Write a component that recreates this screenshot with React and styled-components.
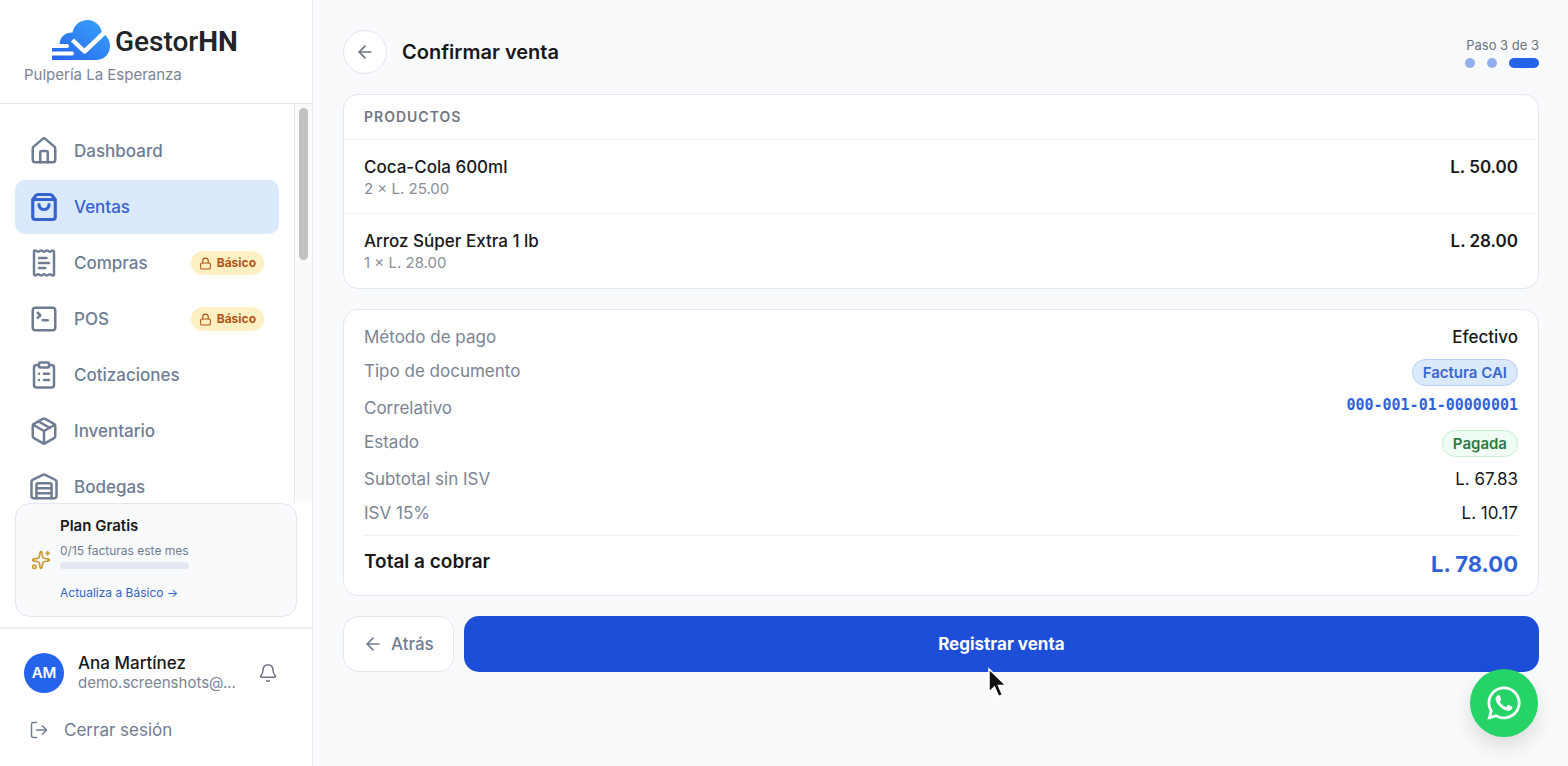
import styled, { createGlobalStyle } from 'styled-components';
import {
  ArrowLeft,
  Bell,
  ClipboardList,
  House,
  Lock,
  LogOut,
  Package,
  ReceiptText,
  ShoppingBag,
  Sparkles,
  SquareTerminal,
  Warehouse,
} from 'lucide-react';
import { FaWhatsapp } from 'react-icons/fa';

const GlobalStyle = createGlobalStyle`
  *, *::before, *::after {
    box-sizing: border-box;
  }

  body {
    margin: 0;
    background-color: #f8fafc;
    color: #18181b;
    font-family: Inter, 'Liberation Sans', sans-serif;
    font-size: 17px;
    line-height: 24px;
  }

  button {
    font: inherit;
    cursor: pointer;
  }

  a {
    text-decoration: none;
  }

  h1, h2, p, ul, dl, dd {
    margin: 0;
    padding: 0;
  }
`;

const Layout = styled.div`
  display: grid;
  grid-template-columns: 313px minmax(0, 1fr);
  min-height: 100vh;
`;

const Sidebar = styled.aside`
  position: sticky;
  top: 0;
  display: flex;
  flex-direction: column;
  height: 100vh;
  background-color: #fff;
  border-right: 1px solid #e5e9f0;
`;

const Brand = styled.div`
  padding: 20px 24px 17px;
  border-bottom: 1px solid #e2e6ec;
`;

const Logo = styled.a`
  display: flex;
  align-items: flex-start;
  gap: 5px;
  padding-left: 28px;
  color: #222326;
  font-family: Roboto, sans-serif;
  font-size: 28px;
  font-weight: 500;
  line-height: 44px;

  svg {
    flex: none;
  }
`;

const Company = styled.p`
  color: #7b8494;
  font-size: 15px;
  line-height: 22px;
`;

const NavArea = styled.div`
  display: flex;
  flex: 1;
  min-height: 0;
`;

const Nav = styled.nav`
  flex: 1;
  padding: 20px 15px 0;
  overflow: hidden;

  ul {
    display: grid;
    gap: 2px;
    list-style: none;
  }
`;

const NavLink = styled.a`
  display: flex;
  align-items: center;
  gap: 15px;
  height: 54px;
  padding: 0 15px 0 14px;
  border-radius: 10px;
  background-color: ${({ $active }) => ($active ? '#dbe9fd' : 'transparent')};
  color: ${({ $active }) => ($active ? '#3563d0' : '#6f7d93')};
  font-weight: 500;
`;

const PlanBadge = styled.span`
  display: flex;
  align-items: center;
  gap: 5px;
  margin-left: auto;
  padding: 0 8px;
  border-radius: 12px;
  background-color: #fef0c3;
  color: #b1541c;
  font-size: 12px;
  font-weight: 700;
`;

const ScrollTrack = styled.div`
  width: 18px;
  padding: 4px;
  background-color: #fafafa;
  border-left: 1px solid #e8e8e8;
`;

const ScrollThumb = styled.div`
  width: 9px;
  height: 39%;
  border-radius: 5px;
  background-color: #c1c1c1;
`;

const PlanCard = styled.section`
  display: flex;
  align-items: center;
  gap: 9px;
  margin: 0 15px 10px;
  padding: 10px 15px 11px;
  border: 1px solid #e2e8f0;
  border-radius: 15px;
  background-color: #f8fafc;
  color: #c99a2c;
`;

const PlanInfo = styled.div`
  font-size: 12px;

  h2 {
    margin-bottom: 2px;
    color: #18181b;
    font-size: 15px;
    font-weight: 600;
  }

  p {
    color: #6f7d93;
    line-height: 22px;
  }

  a {
    display: block;
    margin-top: 12px;
    color: #3563c4;
  }
`;

const UsageBar = styled.div`
  height: 7px;
  border-radius: 4px;
  background-color: #e2e8f0;
`;

const Account = styled.div`
  padding: 24px;
  border-top: 2px solid #edf0f4;
`;

const Profile = styled.div`
  display: flex;
  align-items: center;
`;

const Avatar = styled.span`
  flex: none;
  display: grid;
  place-items: center;
  width: 40px;
  height: 40px;
  margin-right: 14px;
  border-radius: 50%;
  background-color: #2563eb;
  color: #fff;
  font-size: 15px;
  font-weight: 600;
`;

const ProfileText = styled.div`
  flex: 1;
  min-width: 0;
  line-height: 20px;

  strong,
  span {
    display: block;
    white-space: nowrap;
  }

  strong {
    font-weight: 500;
  }

  span {
    color: #7b8494;
    font-size: 15px;
  }
`;

const BellButton = styled.button`
  display: grid;
  place-items: center;
  width: 40px;
  height: 40px;
  padding: 0;
  border: 0;
  background: none;
  color: #6b7280;
`;

const LogoutButton = styled.button`
  display: flex;
  align-items: center;
  gap: 15px;
  margin-top: 25px;
  padding: 0 5px;
  border: 0;
  background: none;
  color: #6f7d93;
`;

const Main = styled.main`
  display: flex;
  flex-direction: column;
  gap: 20px;
  padding: 30px 29px 30px 30px;
`;

const PageHeader = styled.header`
  display: flex;
  align-items: center;
  gap: 15px;

  h1 {
    font-size: 20px;
    font-weight: 600;
  }
`;

const RoundButton = styled.button`
  display: grid;
  place-items: center;
  width: 44px;
  height: 44px;
  padding: 0;
  border: 1px solid #e2e8f0;
  border-radius: 50%;
  background-color: #fff;
  color: #6b7280;
`;

const Steps = styled.div`
  display: flex;
  flex-direction: column;
  align-items: flex-end;
  gap: 5px;
  margin-left: auto;
  color: #6b7280;
  font-size: 13px;
  line-height: 16px;
`;

const Dots = styled.div`
  display: flex;
  gap: 12px;
`;

const Dot = styled.span`
  width: ${({ $current }) => ($current ? '30px' : '10px')};
  height: 10px;
  border-radius: 5px;
  background-color: ${({ $current }) => ($current ? '#2563eb' : '#93aeec')};
`;

const Card = styled.section`
  border: 1px solid #e2e8f0;
  border-radius: 15px;
  background-color: #fff;
`;

const CardTitle = styled.h2`
  padding: 10px 20px;
  color: #6f7785;
  font-size: 14px;
  font-weight: 600;
  letter-spacing: 1px;
  text-transform: uppercase;
`;

const ProductRow = styled.div`
  display: flex;
  justify-content: space-between;
  padding: 15px 20px 14px;
  border-top: 1px solid #f1f4f8;
  font-weight: 500;

  &:last-child {
    padding-bottom: 15px;
  }

  strong {
    font-weight: 600;
  }

  p {
    color: #8a8f99;
    font-size: 15px;
    font-weight: 400;
    line-height: 20px;
  }
`;

const Summary = styled.dl`
  display: flex;
  flex-direction: column;
  gap: 10px;
  padding: 15px 20px;
`;

const SummaryRow = styled.div`
  display: flex;
  justify-content: space-between;
  align-items: flex-start;

  dt {
    color: #7b8494;
  }

  dd {
    font-weight: ${({ $strong }) => ($strong ? 500 : 400)};
  }
`;

const TotalRow = styled.div`
  display: flex;
  justify-content: space-between;
  padding-top: 12px;
  border-top: 1px solid #eef1f5;
  font-size: 19px;
  font-weight: 600;
  line-height: 27px;

  dd {
    color: #2f62d9;
    font-size: 22px;
    font-weight: 700;
    line-height: 32px;
  }
`;

const tones = {
  blue: { background: '#dbe9fd', border: '#b9cff5', text: '#3a66cf' },
  green: { background: '#effdf4', border: '#c3f0d1', text: '#2c7a45' },
};

const Chip = styled.span`
  display: block;
  padding: 0 10px;
  border: 1px solid ${({ $tone }) => tones[$tone].border};
  border-radius: 14px;
  background-color: ${({ $tone }) => tones[$tone].background};
  color: ${({ $tone }) => tones[$tone].text};
  font-size: 15px;
  font-weight: 600;
  line-height: 25px;
`;

const Code = styled.code`
  display: block;
  color: #2f62d9;
  font-family: 'DejaVu Sans Mono', monospace;
  font-size: 15px;
  font-weight: 700;
  line-height: 18px;
`;

const Actions = styled.div`
  display: flex;
  gap: 10px;
`;

const BackButton = styled.button`
  display: flex;
  align-items: center;
  gap: 8px;
  height: 56px;
  padding: 0 19px;
  border: 1px solid #e2e8f0;
  border-radius: 15px;
  background-color: #fff;
  color: #6f7d93;
  font-weight: 500;
`;

const SubmitWrap = styled.div`
  position: relative;
  flex: 1;
`;

const SubmitButton = styled.button`
  width: 100%;
  height: 56px;
  border: 0;
  border-radius: 15px;
  background-color: #1d4ed8;
  color: #fff;
  font-weight: 700;
`;

const Pointer = styled.svg`
  position: absolute;
  top: 51px;
  left: calc(50% - 14px);
  pointer-events: none;
`;

const WhatsappLink = styled.a`
  position: fixed;
  right: 30px;
  bottom: 29px;
  display: grid;
  place-items: center;
  width: 68px;
  height: 68px;
  border-radius: 50%;
  background-color: #25d366;
  box-shadow: 0 10px 20px rgba(0, 0, 0, 0.12);
  color: #fff;
`;

const navItems = [
  { label: 'Dashboard', icon: House },
  { label: 'Ventas', icon: ShoppingBag, active: true },
  { label: 'Compras', icon: ReceiptText, locked: true },
  { label: 'POS', icon: SquareTerminal, locked: true },
  { label: 'Cotizaciones', icon: ClipboardList },
  { label: 'Inventario', icon: Package },
  { label: 'Bodegas', icon: Warehouse },
];

const products = [
  { name: 'Coca-Cola 600ml', detail: '2 × L. 25.00', total: 'L. 50.00' },
  { name: 'Arroz Súper Extra 1 lb', detail: '1 × L. 28.00', total: 'L. 28.00' },
];

const CloudMark = () => (
  <svg width="58" height="41" viewBox="0 0 58 41" aria-hidden="true">
    <defs>
      <linearGradient id="cloud" x1="0" y1="1" x2="1" y2="0">
        <stop offset="0" stopColor="#2563eb" />
        <stop offset="1" stopColor="#3aa5fa" />
      </linearGradient>
    </defs>
    <path
      fill="url(#cloud)"
      d="M0 40V35.500H20a2 2 0 0 0 0-4H0V28H15a2 2 0 0 0 0-4H7.500C8 17 13 12.500 20.500 12.500 22 5 28 0 35.500 0 43 0 49 5.500 50 13 55 15.500 58 20 58 26 58 34 52 40 44 40Z"
    />
    <path
      d="M20.500 20 32.500 31.500 53 12"
      fill="none"
      stroke="#fff"
      strokeWidth="4.500"
      strokeLinejoin="round"
    />
  </svg>
);

const SidebarNav = () => (
  <NavArea>
    <Nav aria-label="Principal">
      <ul>
        {navItems.map(({ label, icon: Icon, active, locked }) => (
          <li key={label}>
            <NavLink href="#" $active={active}>
              <Icon size={30} strokeWidth={active ? 2.5 : 2} />
              {label}
              {locked && (
                <PlanBadge>
                  <Lock size={13} />
                  Básico
                </PlanBadge>
              )}
            </NavLink>
          </li>
        ))}
      </ul>
    </Nav>
    <ScrollTrack>
      <ScrollThumb />
    </ScrollTrack>
  </NavArea>
);

const App = () => {
  return (
    <>
      <GlobalStyle />
      <Layout>
        <Sidebar>
          <Brand>
            <Logo href="#">
              <CloudMark />
              <span>
                Gestor<b>HN</b>
              </span>
            </Logo>
            <Company>Pulpería La Esperanza</Company>
          </Brand>
          <SidebarNav />
          <PlanCard>
            <Sparkles size={20} />
            <PlanInfo>
              <h2>Plan Gratis</h2>
              <p>0/15 facturas este mes</p>
              <UsageBar />
              <a href="#">Actualiza a Básico →</a>
            </PlanInfo>
          </PlanCard>
          <Account>
            <Profile>
              <Avatar>AM</Avatar>
              <ProfileText>
                <strong>Ana Martínez</strong>
                <span>demo.screenshots@...</span>
              </ProfileText>
              <BellButton type="button" aria-label="Notificaciones">
                <Bell size={20} strokeWidth={1.75} />
              </BellButton>
            </Profile>
            <LogoutButton type="button">
              <LogOut size={20} strokeWidth={1.75} />
              Cerrar sesión
            </LogoutButton>
          </Account>
        </Sidebar>
        <Main>
          <PageHeader>
            <RoundButton type="button" aria-label="Volver">
              <ArrowLeft size={20} />
            </RoundButton>
            <h1>Confirmar venta</h1>
            <Steps>
              Paso 3 de 3
              <Dots>
                <Dot />
                <Dot />
                <Dot $current />
              </Dots>
            </Steps>
          </PageHeader>
          <Card>
            <CardTitle>Productos</CardTitle>
            {products.map(({ name, detail, total }) => (
              <ProductRow key={name}>
                <div>
                  {name}
                  <p>{detail}</p>
                </div>
                <strong>{total}</strong>
              </ProductRow>
            ))}
          </Card>
          <Card>
            <Summary>
              <SummaryRow $strong>
                <dt>Método de pago</dt>
                <dd>Efectivo</dd>
              </SummaryRow>
              <SummaryRow>
                <dt>Tipo de documento</dt>
                <dd>
                  <Chip $tone="blue">Factura CAI</Chip>
                </dd>
              </SummaryRow>
              <SummaryRow>
                <dt>Correlativo</dt>
                <dd>
                  <Code>000-001-01-00000001</Code>
                </dd>
              </SummaryRow>
              <SummaryRow>
                <dt>Estado</dt>
                <dd>
                  <Chip $tone="green">Pagada</Chip>
                </dd>
              </SummaryRow>
              <SummaryRow>
                <dt>Subtotal sin ISV</dt>
                <dd>L. 67.83</dd>
              </SummaryRow>
              <SummaryRow>
                <dt>ISV 15%</dt>
                <dd>L. 10.17</dd>
              </SummaryRow>
              <TotalRow>
                <dt>Total a cobrar</dt>
                <dd>L. 78.00</dd>
              </TotalRow>
            </Summary>
          </Card>
          <Actions>
            <BackButton type="button">
              <ArrowLeft size={20} />
              Atrás
            </BackButton>
            <SubmitWrap>
              <SubmitButton type="submit">Registrar venta</SubmitButton>
              <Pointer width="22" height="32" viewBox="0 0 22 32" aria-hidden="true">
                <path
                  d="M2 2V25L7.500 20 11.500 29.500 15.500 28 11.500 18.500H19Z"
                  fill="#111"
                  stroke="#fff"
                  strokeWidth="1.500"
                />
              </Pointer>
            </SubmitWrap>
          </Actions>
        </Main>
      </Layout>
      <WhatsappLink href="#" aria-label="WhatsApp">
        <FaWhatsapp size={38} />
      </WhatsappLink>
    </>
  );
};

export default App;
